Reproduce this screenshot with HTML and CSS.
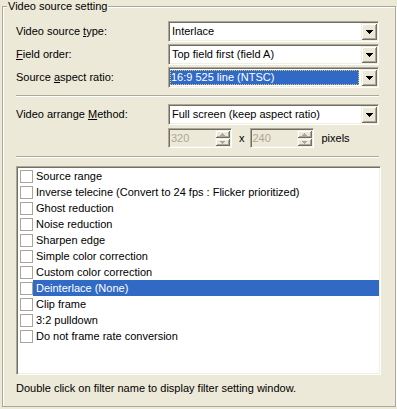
FILE: index.html
```html
<!DOCTYPE html>
<html lang="en">

<head>
    <meta charset="utf-8">
    <title>Video source setting</title>
    <link rel="stylesheet" href="styles.css">
</head>

<body>

    <fieldset class="group">
        <legend>Video source setting</legend>

        <div class="form-grid">
            <label>Video source <u>t</u>ype:</label>
            <div class="combo">
                <span class="combo-text">Interlace</span>
                <span class="combo-btn"><svg width="7" height="4" viewBox="0 0 7 4"><path d="M0 0h7v1h-1v1h-1v1h-1v1h-1v-1h-1v-1h-1v-1h-1z"/></svg></span>
            </div>

            <label><u>F</u>ield order:</label>
            <div class="combo">
                <span class="combo-text">Top field first (field A)</span>
                <span class="combo-btn"><svg width="7" height="4" viewBox="0 0 7 4"><path d="M0 0h7v1h-1v1h-1v1h-1v1h-1v-1h-1v-1h-1v-1h-1z"/></svg></span>
            </div>

            <label>Source <u>a</u>spect ratio:</label>
            <div class="combo">
                <span class="combo-text selected">16:9 525 line (NTSC)</span>
                <span class="combo-btn"><svg width="7" height="4" viewBox="0 0 7 4"><path d="M0 0h7v1h-1v1h-1v1h-1v1h-1v-1h-1v-1h-1v-1h-1z"/></svg></span>
            </div>
        </div>

        <div class="sep"></div>

        <div class="form-grid arrange">
            <label>Video arrange <u>M</u>ethod:</label>
            <div class="combo">
                <span class="combo-text">Full screen (keep aspect ratio)</span>
                <span class="combo-btn"><svg width="7" height="4" viewBox="0 0 7 4"><path d="M0 0h7v1h-1v1h-1v1h-1v1h-1v-1h-1v-1h-1v-1h-1z"/></svg></span>
            </div>

            <div></div>
            <div class="size-row">
                <div class="spin">
                    <span class="spin-text">320</span>
                    <span class="spin-btns">
                        <span class="spin-btn"><svg width="5" height="3" viewBox="0 0 5 3"><path d="M2 0h1v1h1v1h1v1h-5v-1h1v-1h1z"/></svg></span>
                        <span class="spin-btn"><svg width="5" height="3" viewBox="0 0 5 3"><path d="M0 0h5v1h-1v1h-1v1h-1v-1h-1v-1h-1z"/></svg></span>
                    </span>
                </div>
                <span class="times">x</span>
                <div class="spin">
                    <span class="spin-text">240</span>
                    <span class="spin-btns">
                        <span class="spin-btn"><svg width="5" height="3" viewBox="0 0 5 3"><path d="M2 0h1v1h1v1h1v1h-5v-1h1v-1h1z"/></svg></span>
                        <span class="spin-btn"><svg width="5" height="3" viewBox="0 0 5 3"><path d="M0 0h5v1h-1v1h-1v1h-1v-1h-1v-1h-1z"/></svg></span>
                    </span>
                </div>
                <span class="unit">pixels</span>
            </div>
        </div>

        <div class="sep sep-low"></div>

        <ul class="filter-list">
            <li><span class="check"></span><span class="name">Source range</span></li>
            <li><span class="check"></span><span class="name">Inverse telecine (Convert to 24 fps : Flicker prioritized)</span></li>
            <li><span class="check"></span><span class="name">Ghost reduction</span></li>
            <li><span class="check"></span><span class="name">Noise reduction</span></li>
            <li><span class="check"></span><span class="name">Sharpen edge</span></li>
            <li><span class="check"></span><span class="name">Simple color correction</span></li>
            <li><span class="check"></span><span class="name">Custom color correction</span></li>
            <li class="active"><span class="check"></span><span class="name">Deinterlace (None)</span></li>
            <li><span class="check"></span><span class="name">Clip frame</span></li>
            <li><span class="check"></span><span class="name">3:2 pulldown</span></li>
            <li><span class="check"></span><span class="name">Do not frame rate conversion</span></li>
        </ul>

        <p class="hint">Double click on filter name to display filter setting window.</p>
    </fieldset>

</body>

</html>
```

FILE: styles.css
```css
body {
    font-family: "Liberation Sans", Arial, sans-serif;
    font-size: 11px;
    line-height: 13px;
    margin: 0;
    padding: 0;
    background-color: #ece9d8;
    color: #000;
}

/* group box */
.group {
    margin: 0 1px 0 2px;
    padding: 8px 16px 11px 13px;
    border: 1px solid #aca899;
    box-shadow: inset 1px 1px 0 #fff, 1px 1px 0 #fff;
}

.group legend {
    margin-left: -9px;
    padding: 0 1px;
    background-color: #ece9d8;
}

.form-grid {
    display: grid;
    grid-template-columns: 152px 1fr;
    row-gap: 2px;
    align-items: center;
}

.form-grid.arrange {
    row-gap: 3px;
}

.form-grid label {
    padding-bottom: 1px;
}

u {
    text-decoration-thickness: 1px;
    text-underline-offset: 1px;
}

/* sunken fields */
.combo,
.spin,
.filter-list {
    border: 1px solid;
    border-color: #aca899 #fff #fff #aca899;
    box-shadow: inset 1px 1px 0 #716f64, inset -1px -1px 0 #f1efe2;
}

.combo {
    display: flex;
    height: 21px;
    box-sizing: border-box;
    padding: 1px;
    background-color: #fff;
}

.combo-text {
    flex: 1;
    display: flex;
    align-items: center;
    padding-left: 2px;
    margin-right: 1px;
}

.combo-text.selected {
    margin: 1px 2px 1px 0;
    padding-left: 1px;
    background-color: #316ac5;
    color: #fff;
    outline: 1px dotted #d8c878;
    outline-offset: -1px;
}

.combo-btn,
.spin-btn {
    display: flex;
    align-items: center;
    justify-content: center;
    background-color: #ece9d8;
    box-shadow: inset 1px 1px 0 #f1efe2, inset -1px -1px 0 #716f64, inset 2px 2px 0 #fff, inset -2px -2px 0 #aca899;
}

.combo-btn {
    width: 16px;
}

.combo-btn svg {
    fill: #000;
    margin-top: 1px;
}

/* size spinners */
.size-row {
    display: flex;
    align-items: center;
}

.spin {
    display: flex;
    width: 64px;
    height: 20px;
    box-sizing: border-box;
    padding: 1px;
    color: #aca899;
}

.spin-text {
    flex: 1;
    display: flex;
    align-items: center;
    padding-left: 1px;
}

.spin-btns {
    display: flex;
    flex-direction: column;
    width: 15px;
}

.spin-btn {
    flex: 1;
}

.spin-btn svg {
    fill: #aca899;
}

.times {
    margin: 0 5px 0 7px;
}

.unit {
    margin-left: 8px;
}

/* separators */
.sep {
    margin: 7px 0;
    border-top: 1px solid #aca899;
    border-bottom: 1px solid #fff;
}

.sep-low {
    margin: 8px 0;
}

/* filter list */
.filter-list {
    list-style: none;
    margin: 0 -2px 0 0;
    padding: 1px;
    height: 209px;
    box-sizing: border-box;
    background-color: #fff;
}

.filter-list li {
    display: flex;
    align-items: center;
    height: 16px;
    white-space: nowrap;
}

.check {
    width: 11px;
    height: 11px;
    margin-left: 2px;
    border: 1px solid #a9a59a;
    background-color: #fff;
}

.filter-list .name {
    flex: 1;
    height: 16px;
    line-height: 16px;
    padding-left: 3px;
    margin-left: 0;
}

.filter-list li.active .name {
    background-color: #316ac5;
    color: #fff;
}

.hint {
    margin: 7px 0 0;
}
```
